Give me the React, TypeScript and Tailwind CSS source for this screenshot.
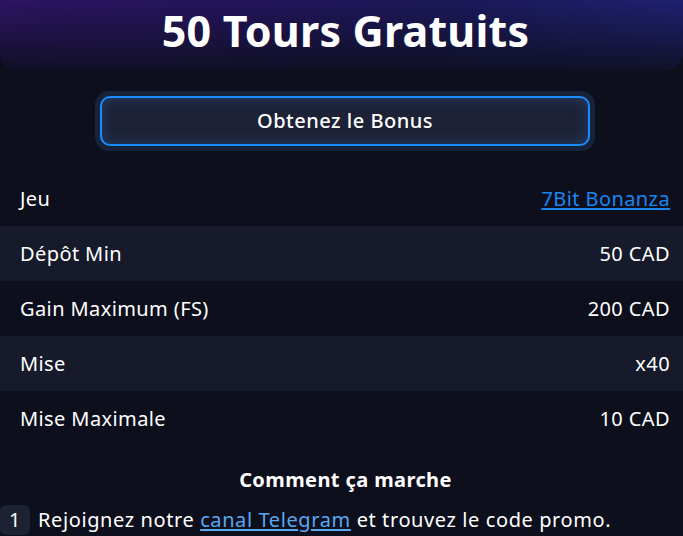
const rows = [
  { label: 'Jeu', value: '7Bit Bonanza', link: true },
  { label: 'Dépôt Min', value: '50 CAD' },
  { label: 'Gain Maximum (FS)', value: '200 CAD' },
  { label: 'Mise', value: 'x40' },
  { label: 'Mise Maximale', value: '10 CAD' },
];

export default function App() {
  return (
    <div className="min-h-[536px] bg-[#0d0f1c] text-white font-['Noto_Sans',sans-serif] overflow-hidden">
      {/* header banner */}
      <div className="relative h-[70px] rounded-b-[18px] overflow-hidden bg-[linear-gradient(90deg,#2c1462_0%,#21145a_40%,#1b1858_65%,#1f2070_100%)]">
        <div className="absolute inset-0 bg-[linear-gradient(180deg,rgba(13,15,28,0)_0%,rgba(13,15,28,0.45)_55%,rgba(13,15,28,0.85)_100%)]" />
        <h1 className="relative text-center pl-[8px] text-[43px] leading-[62px] font-bold tracking-[0.2px]">
          50 Tours Gratuits
        </h1>
      </div>

      <div className="flex justify-center pl-[7px] pt-[21px] pb-[20px]">
        <button className="w-[500px] h-[60px] rounded-[14px] p-[5px] bg-[#17233b]">
          <div className="h-full rounded-[10px] border-2 border-[#1a8cff] bg-[#1d2236] shadow-[inset_0_0_14px_rgba(40,90,160,0.5)] flex items-center justify-center text-[20px] font-medium tracking-[0.5px]">
            Obtenez le Bonus
          </div>
        </button>
      </div>

      <div>
        {rows.map((r, i) => (
          <div
            key={r.label}
            className={`flex items-center justify-between h-[55px] pl-[20px] pr-[13px] text-[20px] tracking-[0.4px] ${
              i % 2 === 1 ? 'bg-[#161a2a]' : 'bg-[#0d0f1c]'
            }`}
          >
            <span>{r.label}</span>
            {r.link ? (
              <a href="#" className="text-[#1a86f0] underline underline-offset-2">
                {r.value}
              </a>
            ) : (
              <span>{r.value}</span>
            )}
          </div>
        ))}
      </div>

      <h2 className="text-center pl-[8px] text-[20px] font-bold tracking-[0.4px] pt-[21px] pb-[12px] leading-[26px]">Comment ça marche</h2>

      <div className="flex items-center gap-[8px] text-[20px] tracking-[0.6px]">
        <span className="w-[30px] h-[30px] rounded-[6px] bg-[#1c2234] flex items-center justify-center">1</span>
        <span>
          Rejoignez notre{' '}
          <a href="#" className="text-[#5aa8f0] underline underline-offset-2">
            canal Telegram
          </a>{' '}
          et trouvez le code promo.
        </span>
      </div>
    </div>
  );
}
